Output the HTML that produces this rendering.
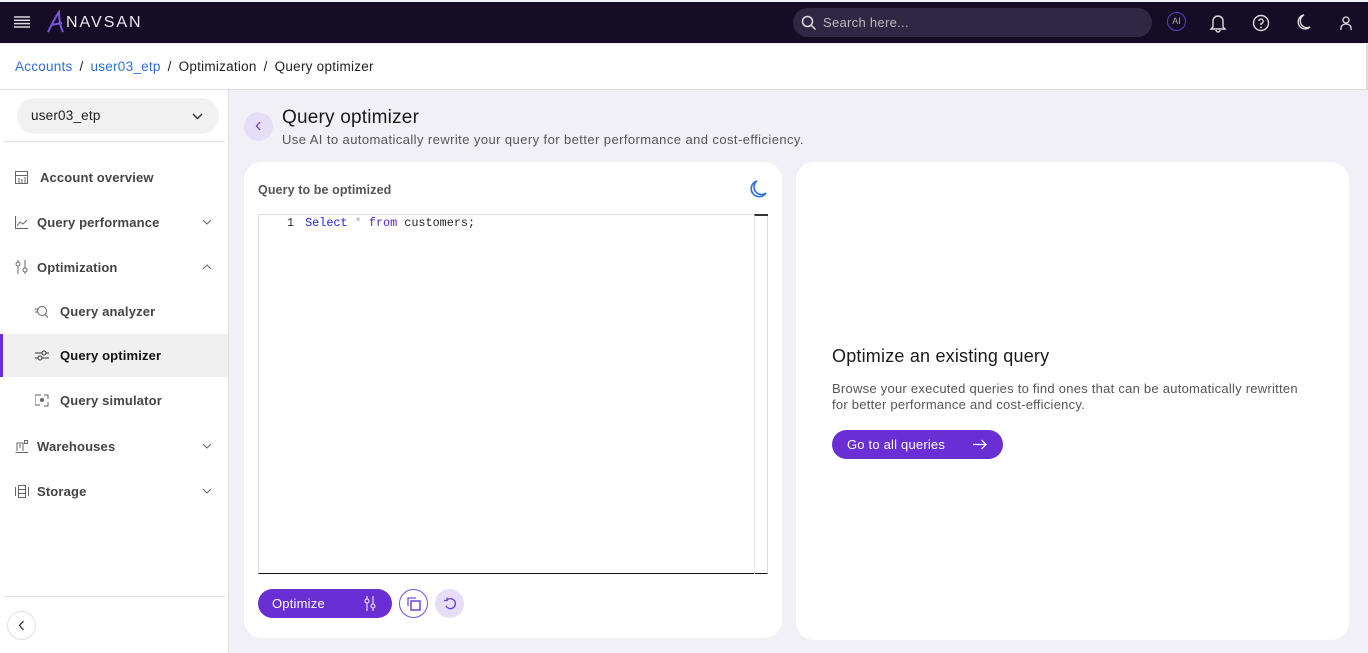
<!DOCTYPE html>
<html><head><meta charset="utf-8">
<style>
*{box-sizing:border-box;margin:0;padding:0}
body{width:1368px;height:653px;overflow:hidden;font-family:"Liberation Sans",sans-serif;background:#f2f0f7;position:relative;color:#222}
.top{position:absolute;left:0;top:2px;width:1368px;height:41px;background:#150d25}
.abs{position:absolute}
.crumb{position:absolute;left:0;top:44px;width:1368px;height:46px;background:#fff;border-bottom:1px solid #ddd;border-right:2px solid #ddd;font-size:13.5px;line-height:46px;padding-left:15px;color:#222;letter-spacing:0.25px}
.crumb a{color:#2f6fdc;text-decoration:none}
.crumb span.s{margin:0 7px}
.side{position:absolute;left:0;top:90px;width:229px;height:563px;background:#fff;border-right:1px solid #ddd}
.nav{position:absolute;left:0;width:228px;font-size:13px;font-weight:bold;color:#444;letter-spacing:0.15px}
.nav svg{position:absolute}
.card{position:absolute;background:#fff;border-radius:18px}
.btn{position:absolute;background:#6a2fd4;color:#fff;border-radius:15px;font-size:13px;letter-spacing:0.2px}
</style></head><body>
<div class="top">
 <svg class="abs" style="left:14px;top:14px" width="16" height="12"><g stroke="#ddd" stroke-width="1.5"><line x1="0" y1="1" x2="16" y2="1"/><line x1="0" y1="4.3" x2="16" y2="4.3"/><line x1="0" y1="7.6" x2="16" y2="7.6"/><line x1="0" y1="11" x2="16" y2="11"/></g></svg>
 <svg class="abs" style="left:46px;top:8px" width="20" height="24"><path d="M2 22 C6 14 10 6 13 2 C13 10 14 16 17 22 M5 15 L16 13" stroke="#7b55e0" stroke-width="2" fill="none"/></svg>
 <div class="abs" style="left:66px;top:12px;color:#e8e8f0;font-size:16px;letter-spacing:2px">NAVSAN</div>
 <div class="abs" style="left:793px;top:6px;width:359px;height:29px;border-radius:15px;background:#2f2743"></div>
 <svg class="abs" style="left:801px;top:13px" width="16" height="16"><circle cx="6.5" cy="6.5" r="5" stroke="#ddd" stroke-width="1.5" fill="none"/><line x1="10" y1="10" x2="14.5" y2="14.5" stroke="#ddd" stroke-width="1.5"/></svg>
 <div class="abs" style="left:823px;top:13px;color:#bbb;font-size:13px;letter-spacing:0.3px">Search here...</div>
 <div class="abs" style="left:1167px;top:10px;width:19px;height:19px;border-radius:50%;border:1.5px solid #5a3fc0;color:#aaa;font-size:9px;text-align:center;line-height:16px">AI</div>
 <svg class="abs" style="left:1209px;top:11px" width="18" height="20"><path d="M4 14 V8 a5 5 0 0 1 10 0 V14 L16 16 H2 Z M7 17 a2 2 0 0 0 4 0" stroke="#ddd" stroke-width="1.4" fill="none"/></svg>
 <svg class="abs" style="left:1252px;top:12px" width="18" height="18"><circle cx="9" cy="9" r="7.5" stroke="#ddd" stroke-width="1.4" fill="none"/><path d="M6.8 7 a2.2 2.2 0 1 1 2.2 2.5 V11" stroke="#ddd" stroke-width="1.4" fill="none"/><circle cx="9" cy="13.4" r=".9" fill="#ddd"/></svg>
 <svg class="abs" style="left:1296px;top:12px" width="16" height="18"><path d="M8 1 A7 7 0 1 0 14 13 A6 6 0 0 1 8 1 Z" stroke="#ddd" stroke-width="1.4" fill="none"/></svg>
 <svg class="abs" style="left:1339px;top:13px" width="14" height="16"><circle cx="7" cy="5" r="3" stroke="#ddd" stroke-width="1.3" fill="none"/><path d="M2 15 V13 a5 4 0 0 1 10 0 V15" stroke="#ddd" stroke-width="1.3" fill="none"/></svg>
</div>
<div class="crumb"><a>Accounts</a><span class="s">/</span><a>user03_etp</a><span class="s">/</span>Optimization<span class="s">/</span>Query optimizer</div>
<div class="side">
 <div class="abs" style="left:17px;top:8px;width:202px;height:36px;border-radius:18px;background:#f1f1f1;font-size:13.5px;line-height:36px;padding-left:14px;letter-spacing:0.2px">user03_etp</div>
 <svg class="abs" style="left:192px;top:23px" width="11" height="7"><path d="M1 1 L5.5 5.5 L10 1" stroke="#333" stroke-width="1.4" fill="none"/></svg>
 <div class="abs" style="left:4px;top:51px;width:221px;height:1px;background:#e2e2e2"></div>
 <div class="nav" style="top:80px;height:20px"><svg style="left:15px;top:1px" width="13" height="13"><rect x=".5" y=".5" width="12" height="12" stroke="#666" fill="none"/><path d="M.5 4.5H12.5M4 7V12M7 8V12M10 6V12" stroke="#666"/></svg><span class="abs" style="left:40px;top:0">Account overview</span></div>
 <div class="nav" style="top:125px;height:20px"><svg style="left:15px;top:1px" width="13" height="13"><path d="M.5 0V12.5H13M2 10L5 6 8 8 12 4" stroke="#666" fill="none"/></svg><span class="abs" style="left:37px;top:0">Query performance</span><svg style="left:202px;top:4px" width="10" height="6"><path d="M1 1L5 5 9 1" stroke="#666" fill="none"/></svg></div>
 <div class="nav" style="top:170px;height:20px"><svg style="left:15px;top:0" width="13" height="14"><path d="M3 0V14M10 0V14" stroke="#666"/><circle cx="3" cy="4" r="2" fill="#fff" stroke="#666"/><circle cx="10" cy="10" r="2" fill="#fff" stroke="#666"/></svg><span class="abs" style="left:37px;top:0">Optimization</span><svg style="left:202px;top:4px" width="10" height="6"><path d="M1 5L5 1 9 5" stroke="#666" fill="none"/></svg></div>
 <div class="nav" style="top:214px;height:20px"><svg style="left:35px;top:1px" width="14" height="13"><circle cx="7" cy="6" r="4.5" stroke="#666" fill="none"/><path d="M10 9.5L13 12.5M0 4H3M0 7H3" stroke="#666"/></svg><span class="abs" style="left:60px;top:0">Query analyzer</span></div>
 <div class="abs" style="left:0;top:244px;width:228px;height:43px;background:#f0f0f0;border-left:3px solid #6a2fd4"></div>
 <div class="nav" style="top:258px;height:20px;color:#111"><svg style="left:35px;top:1px" width="14" height="13"><path d="M0 4H14M0 9H14" stroke="#333"/><circle cx="9" cy="4" r="2" fill="#f0f0f0" stroke="#333"/><circle cx="5" cy="9" r="2" fill="#f0f0f0" stroke="#333"/></svg><span class="abs" style="left:60px;top:0">Query optimizer</span></div>
 <div class="nav" style="top:303px;height:20px"><svg style="left:35px;top:1px" width="14" height="13"><path d="M0 1H6M0 1V11H5M9 1H13V5M9 12H13V8" stroke="#666" fill="none"/><circle cx="7" cy="6" r="2" fill="#666"/></svg><span class="abs" style="left:60px;top:0">Query simulator</span></div>
 <div class="nav" style="top:349px;height:20px"><svg style="left:15px;top:1px" width="14" height="13"><path d="M.5 12.5H13M2 11V3H8V11M4 5H6M4 7H6" stroke="#666" fill="none"/><rect x="9.5" y=".5" width="3" height="3" stroke="#666" fill="none"/></svg><span class="abs" style="left:37px;top:0">Warehouses</span><svg style="left:202px;top:4px" width="10" height="6"><path d="M1 1L5 5 9 1" stroke="#666" fill="none"/></svg></div>
 <div class="nav" style="top:394px;height:20px"><svg style="left:15px;top:1px" width="14" height="13"><rect x="3.5" y=".5" width="7" height="12" stroke="#666" fill="none"/><path d="M.5 2V11M13.5 2V11M3.5 4.5H10.5M3.5 8.5H10.5" stroke="#666"/></svg><span class="abs" style="left:37px;top:0">Storage</span><svg style="left:202px;top:4px" width="10" height="6"><path d="M1 1L5 5 9 1" stroke="#666" fill="none"/></svg></div>
 <div class="abs" style="left:4px;top:506px;width:221px;height:1px;background:#e0e0e0"></div>
 <div class="abs" style="left:7px;top:521px;width:29px;height:29px;border-radius:50%;border:1px solid #e0e0e0"></div>
 <svg class="abs" style="left:18px;top:530px" width="7" height="11"><path d="M5.5 1L1.5 5.5 5.5 10" stroke="#333" stroke-width="1.3" fill="none"/></svg>
</div>
<div class="abs" style="left:244px;top:112px;width:29px;height:29px;border-radius:50%;background:#e6def7"></div>
<svg class="abs" style="left:255px;top:121px" width="7" height="10"><path d="M5 1L1.5 5 5 9" stroke="#6a3fd0" stroke-width="1.3" fill="none"/></svg>
<div class="abs" style="left:282px;top:107px;font-size:19px;color:#1a1a1a;letter-spacing:0.2px">Query optimizer</div>
<div class="abs" style="left:282px;top:132px;font-size:13px;color:#555;letter-spacing:0.42px">Use AI to automatically rewrite your query for better performance and cost-efficiency.</div>
<div class="card" style="left:244px;top:162px;width:538px;height:476px">
 <div class="abs" style="left:14px;top:21px;font-size:12.5px;font-weight:bold;color:#555;letter-spacing:0.1px">Query to be optimized</div>
 <svg class="abs" style="left:504px;top:17px" width="20" height="20"><path d="M9 2 A8 8 0 1 0 18 14 A7.5 7.5 0 0 1 9 2 Z" stroke="#2f6fdc" stroke-width="1.6" fill="none"/></svg>
 <div class="abs" style="left:14px;top:52px;width:510px;height:360px;border:1px solid #ddd;border-bottom:1px solid #111;background:#fff"></div>
 <div class="abs" style="left:510px;top:52px;width:14px;height:360px;border-left:1px solid #e8e8e8;border-top:2px solid #333"></div>
 <div class="abs" style="left:43px;top:53px;font-family:'Liberation Mono',monospace;font-size:11.8px;line-height:16px;white-space:pre"><span style="color:#333">1</span><span style="display:inline-block;width:11px"></span><span style="color:#2222ee">Select</span> <span style="color:#aaa">*</span> <span style="color:#5522cc">from</span> customers;</div>
 <div class="btn" style="left:14px;top:427px;width:134px;height:29px;line-height:29px;padding-left:14px">Optimize</div>
 <svg class="abs" style="left:120px;top:434px" width="12" height="15"><path d="M3 0V15M9 0V15" stroke="#fff"/><circle cx="3" cy="5" r="2" fill="#6a2fd4" stroke="#fff"/><circle cx="9" cy="10" r="2" fill="#6a2fd4" stroke="#fff"/></svg>
 <div class="abs" style="left:155px;top:427px;width:29px;height:29px;border-radius:50%;border:1.5px solid #7a4fe0"></div>
 <svg class="abs" style="left:163px;top:435px" width="14" height="14"><path d="M1 9V1H9" stroke="#7a4fe0" fill="none" stroke-width="1.3"/><rect x="4" y="4" width="9" height="9" stroke="#7a4fe0" fill="none" stroke-width="1.6"/></svg>
 <div class="abs" style="left:191px;top:427px;width:29px;height:29px;border-radius:50%;background:#e6def7"></div>
 <svg class="abs" style="left:199px;top:435px" width="14" height="14"><path d="M3 9 A5 5 0 1 0 4 3 M4 0.5V3.5H1" stroke="#6a3fd0" fill="none" stroke-width="1.3"/></svg>
</div>
<div class="card" style="left:796px;top:162px;width:553px;height:478px">
 <div class="abs" style="left:36px;top:184px;font-size:18px;color:#1a1a1a;letter-spacing:0.2px">Optimize an existing query</div>
 <div class="abs" style="left:36px;top:219px;font-size:13px;line-height:16px;color:#555;width:478px;letter-spacing:0.25px">Browse your executed queries to find ones that can be automatically rewritten for better performance and cost-efficiency.</div>
 <div class="btn" style="left:36px;top:268px;width:171px;height:29px;line-height:29px;padding-left:15px">Go to all queries</div>
 <svg class="abs" style="left:177px;top:277px" width="14" height="11"><path d="M0 5.5H13M8.5 1L13 5.5 8.5 10" stroke="#fff" fill="none" stroke-width="1.2"/></svg>
</div>
</body></html>
